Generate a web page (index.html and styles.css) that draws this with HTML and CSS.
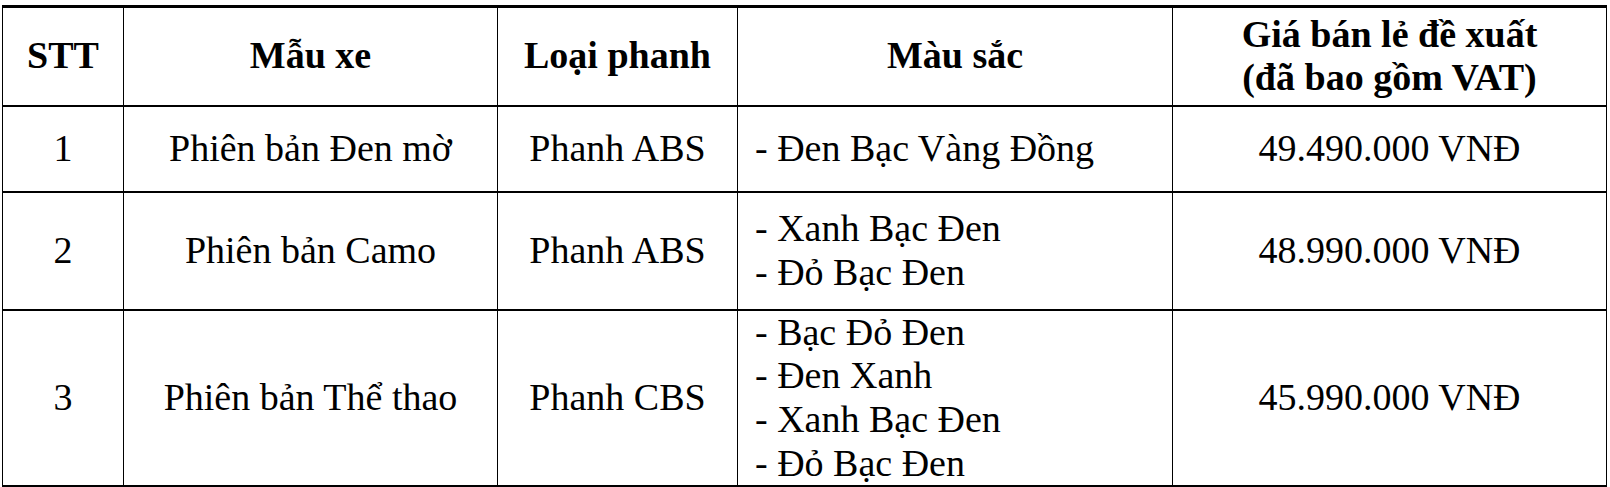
FILE: index.html
```html
<!DOCTYPE html>
<html lang="vi">
<head>
<meta charset="utf-8">
<title>Bảng giá</title>
<link rel="stylesheet" href="styles.css">
</head>
<body>
<table class="price-table">
  <colgroup>
    <col class="c-stt">
    <col class="c-model">
    <col class="c-brake">
    <col class="c-color">
    <col class="c-price">
  </colgroup>
  <thead>
    <tr class="row-head">
      <th>STT</th>
      <th>Mẫu xe</th>
      <th>Loại phanh</th>
      <th>Màu sắc</th>
      <th>Giá bán lẻ đề xuất<br>(đã bao gồm VAT)</th>
    </tr>
  </thead>
  <tbody>
    <tr class="row-1">
      <td>1</td>
      <td>Phiên bản Đen mờ</td>
      <td>Phanh ABS</td>
      <td class="colors">- Đen Bạc Vàng Đồng</td>
      <td>49.490.000 VNĐ</td>
    </tr>
    <tr class="row-2">
      <td>2</td>
      <td>Phiên bản Camo</td>
      <td>Phanh ABS</td>
      <td class="colors">- Xanh Bạc Đen<br>- Đỏ Bạc Đen</td>
      <td>48.990.000 VNĐ</td>
    </tr>
    <tr class="row-3">
      <td>3</td>
      <td>Phiên bản Thể thao</td>
      <td>Phanh CBS</td>
      <td class="colors">- Bạc Đỏ Đen<br>- Đen Xanh<br>- Xanh Bạc Đen<br>- Đỏ Bạc Đen</td>
      <td>45.990.000 VNĐ</td>
    </tr>
  </tbody>
</table>
</body>
</html>
```
FILE: styles.css
```css
html, body {
  margin: 0;
  padding: 0;
  background: #ffffff;
}

body,
.price-table,
.price-table th,
.price-table td {
  font-family: "Liberation Serif", "Times New Roman", Tinos, Times, "DejaVu Serif", serif;
  color: #000;
}

.price-table {
  margin: 5px 0 0 2px;
  width: 1604px;
  table-layout: fixed;
  border-collapse: collapse;
  font-size: 38px;
  line-height: 1.15;
}

.c-stt { width: 121px; }
.c-model { width: 374px; }
.c-brake { width: 240px; }
.c-color { width: 435px; }
.c-price { width: 434px; }

.price-table th,
.price-table td {
  border-left: 1px solid #000;
  border-right: 1px solid #000;
  border-top: 2px solid #000;
  border-bottom: 2px solid #000;
  padding: 0;
  text-align: center;
  vertical-align: middle;
  white-space: nowrap;
}

.price-table th {
  font-weight: bold;
  border-top-width: 3px;
}

.price-table td.colors {
  text-align: left;
  padding-left: 17px;
}

.row-head { height: 99px; }
.row-1 { height: 86px; }
.row-2 { height: 118px; }
```
